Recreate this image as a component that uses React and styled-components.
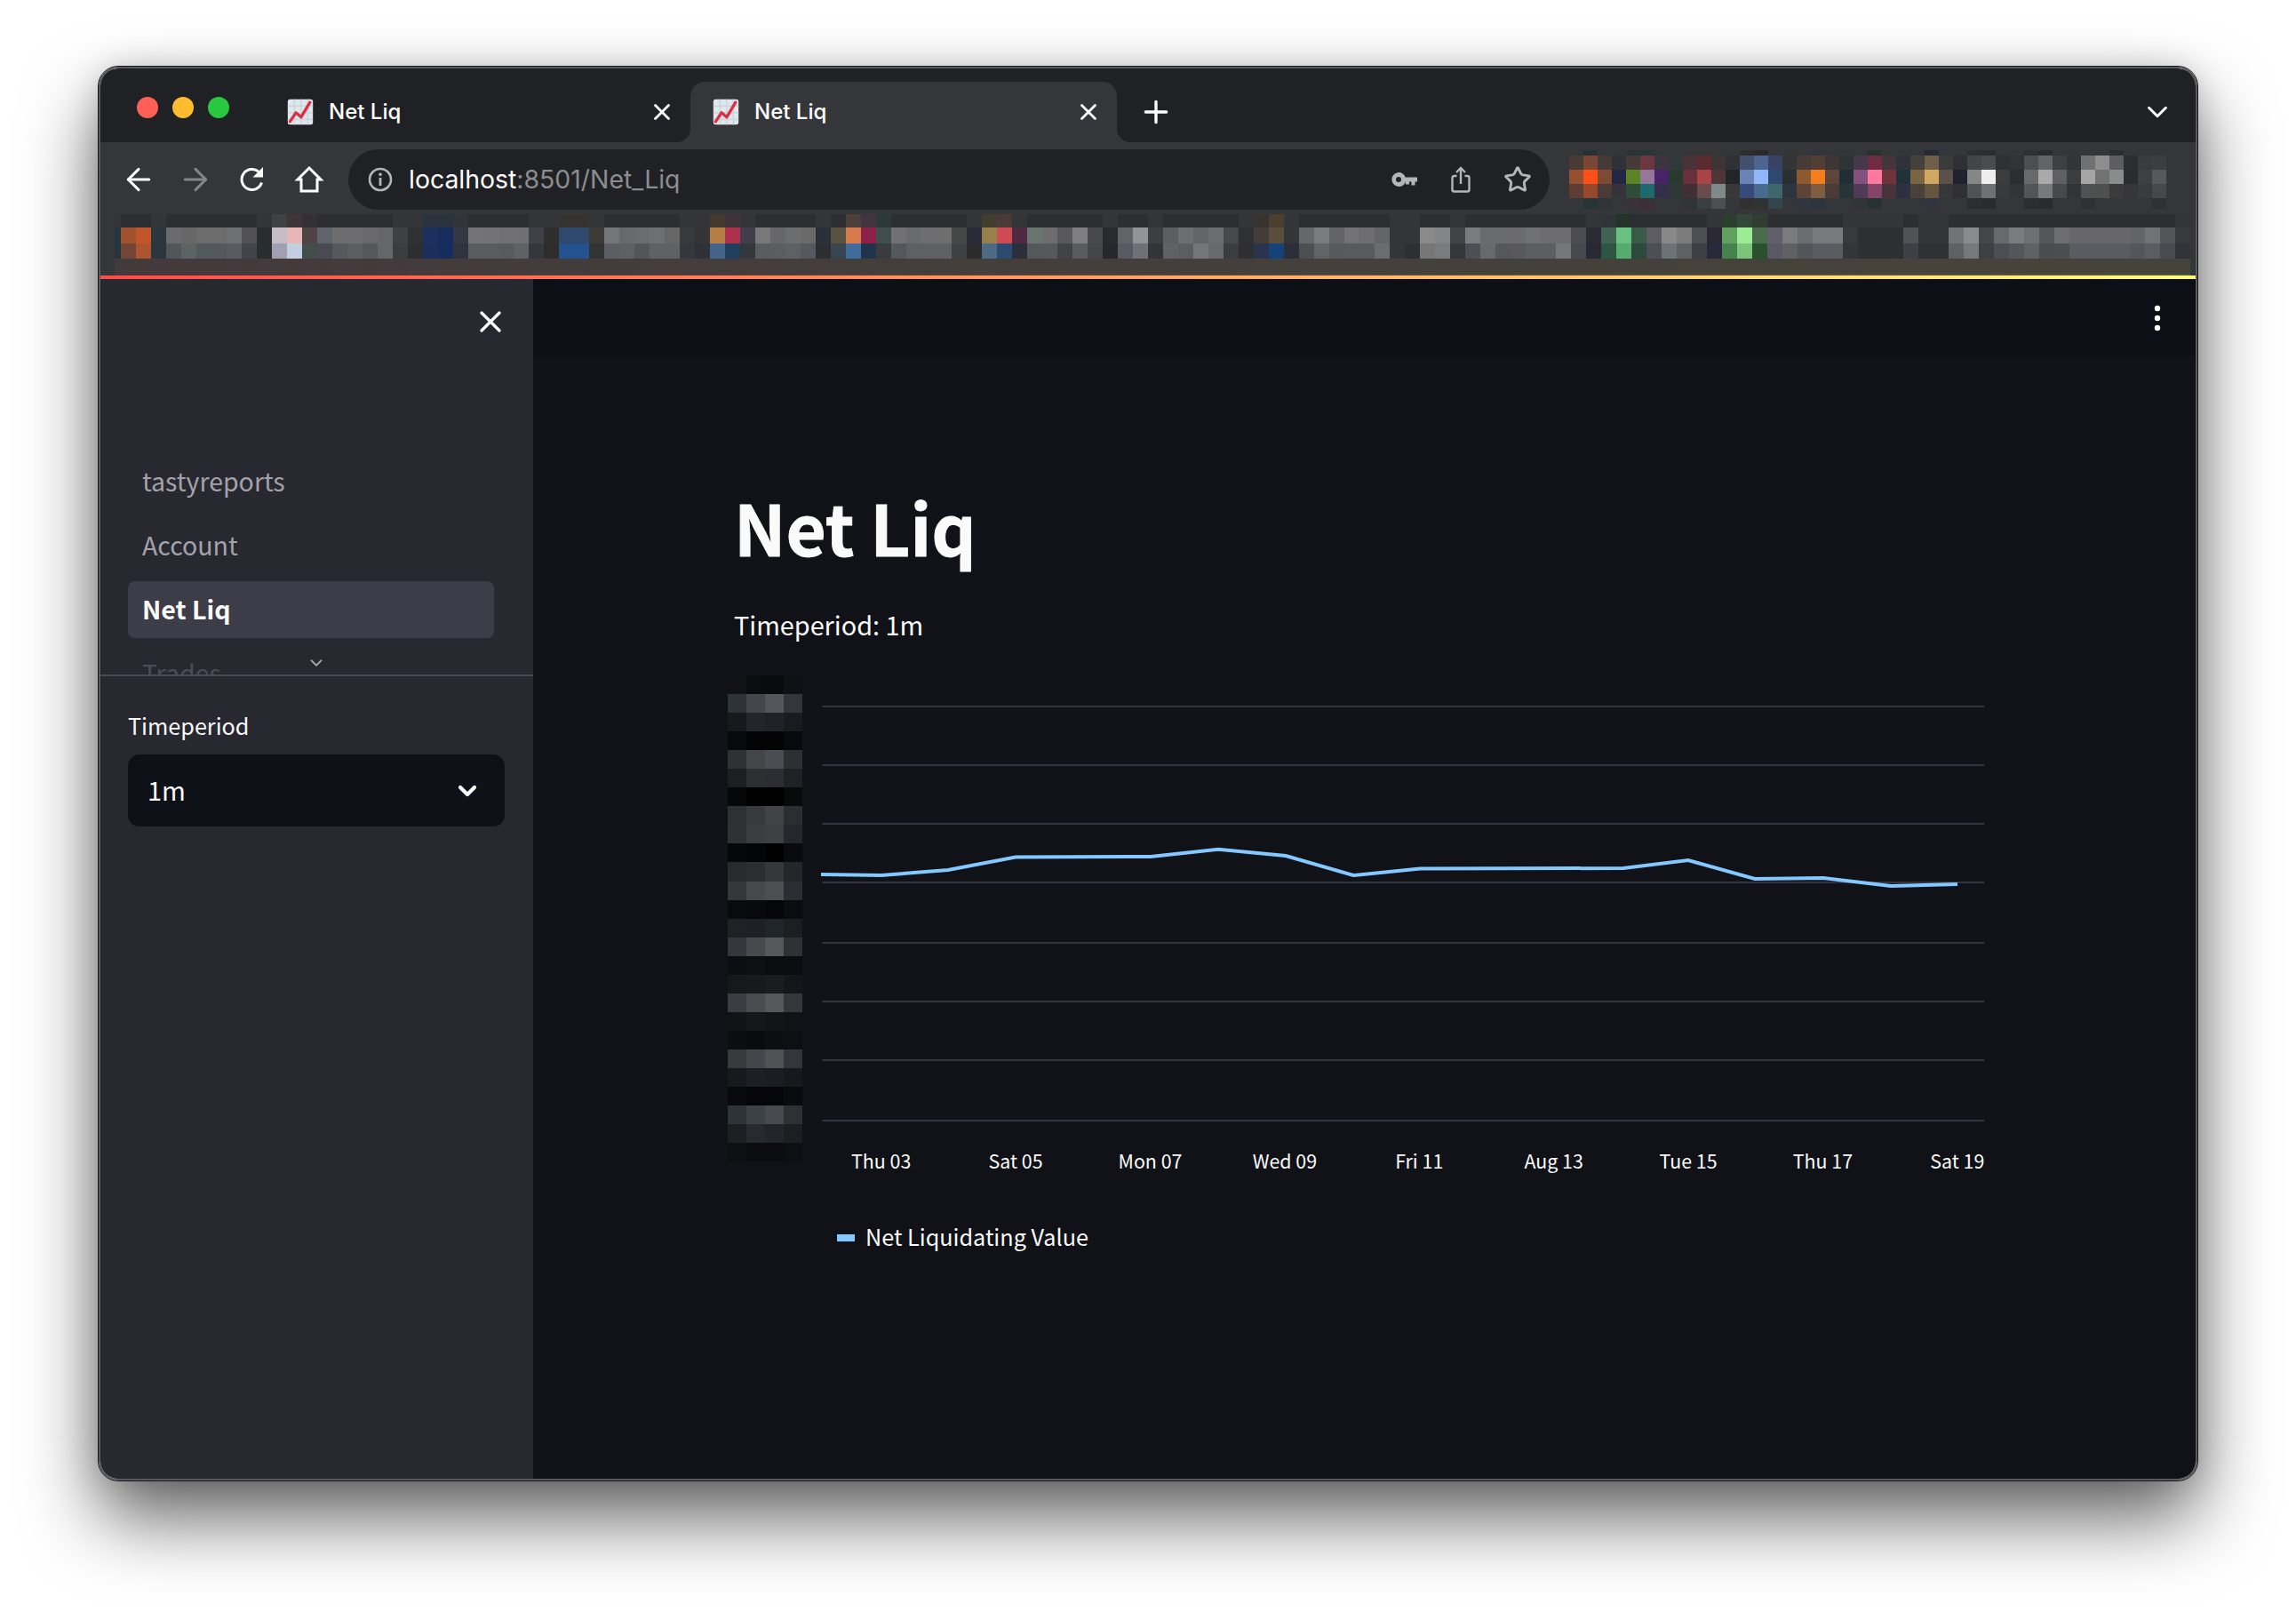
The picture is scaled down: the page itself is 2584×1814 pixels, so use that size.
import styled, { createGlobalStyle } from 'styled-components';
import { ArrowLeft, ArrowRight, ChevronDown, Plus, Star, X } from 'lucide-react';

const GlobalStyle = createGlobalStyle`
  html, body {
    margin: 0;
    padding: 0;
    background: #fff;
  }
`;

const Page = styled.div`
  box-sizing: border-box;
  width: 2584px;
  height: 1814px;
  padding: 75px 111px;
  overflow: hidden;
`;

const Window = styled.div`
  box-sizing: border-box;
  width: 2362px;
  height: 1591px;
  display: flex;
  flex-direction: column;
  border: 2px solid #58595d;
  border-radius: 22px;
  overflow: hidden;
  outline: 1px solid #16171a;
  box-shadow: 0 42px 84px rgba(0, 0, 0, 0.62), 0 0 36px rgba(0, 0, 0, 0.15);
`;

const TitleBar = styled.div`
  height: 83px;
  flex: none;
  display: flex;
  align-items: flex-end;
  background: #202124;
  color: #fff;
  font-family: Inter, "Liberation Sans", sans-serif;
`;

const Lights = styled.div`
  display: flex;
  gap: 16px;
  align-self: flex-start;
  margin: 32px 0 0 41px;
  width: 150px;
`;

const Light = styled.span`
  width: 24px;
  height: 24px;
  border-radius: 50%;
  background: ${(p) => p.$color};
`;

const Tab = styled.div`
  position: relative;
  box-sizing: border-box;
  width: ${(p) => (p.$active ? '480px' : '473px')};
  height: 68px;
  display: flex;
  align-items: center;
  padding: 0 17px 0 ${(p) => (p.$active ? '25px' : '19px')};
  border-radius: 16px 16px 0 0;
  background: ${(p) => (p.$active ? '#35363a' : 'transparent')};

  ${(p) =>
    p.$active &&
    `
    &::before, &::after {
      content: '';
      position: absolute;
      bottom: 0;
      width: 16px;
      height: 16px;
    }
    &::before {
      left: -16px;
      background: radial-gradient(circle at 0 0, transparent 16px, #35363a 16.5px);
    }
    &::after {
      right: -16px;
      background: radial-gradient(circle at 100% 0, transparent 16px, #35363a 16.5px);
    }
  `}
`;

const TabTitle = styled.span`
  flex: 1;
  margin-left: 17px;
  font-size: 24px;
  font-weight: 500;
  line-height: 30px;
`;

const NewTab = styled.div`
  display: flex;
  align-items: center;
  height: 68px;
  margin-left: 24px;
`;

const TabMenu = styled.div`
  margin-left: auto;
  height: 68px;
  display: flex;
  align-items: center;
  padding-right: 24px;
`;

const Toolbar = styled.div`
  height: 80px;
  flex: none;
  box-sizing: border-box;
  padding-top: 4px;
  display: flex;
  align-items: center;
  background: #35363a;
  color: #fff;
`;

const NavIcons = styled.div`
  width: 279px;
  box-sizing: border-box;
  padding-left: 23px;
  display: flex;
  align-items: center;
  gap: 24px;
`;

const NavIcon = styled.span`
  width: 40px;
  height: 40px;
  display: flex;
  align-items: center;
  justify-content: center;
  color: ${(p) => (p.$dim ? '#85868a' : '#fff')};
`;

const Omnibox = styled.div`
  box-sizing: border-box;
  width: 1352px;
  height: 68px;
  display: flex;
  align-items: center;
  padding: 0 20px 0 22px;
  border-radius: 34px;
  background: #202124;
`;

const Url = styled.div`
  flex: 1;
  margin-left: 18px;
  font-family: Inter, "Liberation Sans", sans-serif;
  font-size: 28.4px;
  line-height: 40px;
  color: #fff;

  span {
    color: #8c8d90;
  }
`;

const OmniIcons = styled.div`
  display: flex;
  align-items: center;
  gap: 37px;
  color: #b4b5b8;
`;

const Extensions = styled.div`
  margin-left: 22px;
  display: flex;
`;

const Bookmarks = styled.div`
  height: 70px;
  flex: none;
  box-sizing: border-box;
  padding: 1px 0 0 16px;
  background: #35363a;

  svg {
    display: block;
  }
`;

const Decoration = styled.div`
  height: 4px;
  flex: none;
  background: linear-gradient(90deg, #ff4b4b, #fffd80);
`;

const Body = styled.div`
  flex: 1;
  min-height: 0;
  display: flex;
  font-family: "Noto Sans CJK SC", "Noto Sans", sans-serif;
  color: #fafafa;
`;

const Sidebar = styled.aside`
  width: 487px;
  flex: none;
  display: flex;
  flex-direction: column;
  background: #282831;
`;

const NavArea = styled.div`
  position: relative;
  height: 445px;
  flex: none;
  overflow: hidden;
  border-bottom: 2px solid #4b4b56;
  box-sizing: content-box;
`;

const CloseRow = styled.div`
  height: 196px;
  box-sizing: border-box;
  padding: 28px 28px 0 0;
  display: flex;
  justify-content: flex-end;
  align-items: flex-start;
`;

const NavList = styled.nav`
  display: flex;
  flex-direction: column;
  gap: 8px;
  padding-left: 31px;
  width: 412px;
`;

const NavItem = styled.div`
  box-sizing: border-box;
  height: 64px;
  display: flex;
  align-items: center;
  padding: 0 0 3px 16px;
  border-radius: 8px;
  font-size: 28.5px;
  font-weight: ${(p) => (p.$active ? 600 : 400)};
  color: ${(p) => (p.$active ? '#fafafa' : p.$faded ? '#4c4c57' : '#a3a3a9')};
  background: ${(p) => (p.$active ? '#3d3d49' : 'transparent')};
`;

const MoreNav = styled.span`
  position: absolute;
  left: 232px;
  top: 421px;
  display: flex;
  color: #a3a3a9;
`;

const SidebarForm = styled.div`
  padding: 35px 31px 0;
`;

const FieldLabel = styled.div`
  font-size: 25.2px;
  line-height: 40px;
  color: #fafafa;
`;

const SelectBox = styled.div`
  box-sizing: border-box;
  width: 424px;
  height: 81px;
  margin-top: 13px;
  display: flex;
  align-items: center;
  justify-content: space-between;
  padding: 0 26px 0 22px;
  border-radius: 13px;
  background: #0e1117;
  font-size: 29px;

  span {
    padding-bottom: 3px;
  }
`;

const Main = styled.main`
  flex: 1;
  min-width: 0;
  background: #101217;
`;

const AppHeader = styled.header`
  height: 87px;
  box-sizing: border-box;
  padding: 28px 39px 0 0;
  display: flex;
  justify-content: flex-end;
  align-items: flex-start;
  background: #0c0f16;
`;

const Content = styled.section`
  padding: 131px 0 0 226px;
`;

const Title = styled.h1`
  margin: 0;
  font-size: 78px;
  font-weight: 700;
  line-height: 120px;
  color: #fafafa;
  -webkit-text-stroke: 0.8px #fafafa;
`;

const Caption = styled.p`
  margin: 29px 0 0;
  font-size: 28.8px;
  line-height: 44px;
  color: #fafafa;
`;

const Chart = styled.div`
  display: flex;
  margin: 35px 0 0 -7px;
`;

const YAxis = styled.svg`
  display: block;
  flex: none;
`;

const PlotColumn = styled.div`
  margin-left: 13px;
  display: flex;
  flex-direction: column;
`;

const Plot = styled.svg`
  display: block;
`;

const XAxis = styled.div`
  display: grid;
  grid-template-columns: repeat(9, 151.4px);
  margin-top: 6px;
  font-size: 21.4px;
  line-height: 40px;
  color: #fafafa;
`;

const Tick = styled.span`
  text-align: center;
`;

const Legend = styled.div`
  display: flex;
  align-items: center;
  gap: 12px;
  margin: 45px 0 0 26px;
  font-size: 25.2px;
  line-height: 40px;
`;

const LegendSwatch = styled.span`
  width: 20px;
  height: 8px;
  margin-top: 3px;
  background: #83c9ff;
`;

const Favicon = () => (
  <svg width="30" height="30" viewBox="0 0 36 36">
    <rect x="1" y="1" width="34" height="34" rx="3" fill="#e1e8ed" />
    <path d="M10 1v34M19 1v34M28 1v34M1 10h34M1 19h34M1 28h34" stroke="#ccd6dd" strokeWidth="2" />
    <path d="M4 31 L12 19 L19 25 L31 5" fill="none" stroke="#dd2e44" strokeWidth="4" strokeLinecap="round" strokeLinejoin="round" />
  </svg>
);

const ReloadIcon = () => (
  <svg width="34" height="34" viewBox="0 0 34 34">
    <path d="M27.5 20.5 A11.5 11.5 0 1 1 24 8.2" fill="none" stroke="currentColor" strokeWidth="3" />
    <path d="M29 3 V14.5 H17.5 Z" fill="currentColor" />
  </svg>
);

const HomeIcon = () => (
  <svg width="34" height="34" viewBox="0 0 34 34">
    <path d="M17 4 L30 17 H26 V30 H8 V17 H4 Z" fill="none" stroke="currentColor" strokeWidth="3" strokeLinejoin="miter" />
  </svg>
);

const InfoIcon = () => (
  <svg width="28" height="28" viewBox="0 0 28 28">
    <circle cx="14" cy="14" r="12" fill="none" stroke="#b4b5b8" strokeWidth="2.6" />
    <path d="M14 12v9" stroke="#b4b5b8" strokeWidth="2.8" />
    <circle cx="14" cy="8.2" r="1.8" fill="#b4b5b8" />
  </svg>
);

const KeyIcon = () => (
  <svg width="30" height="30" viewBox="0 0 30 30">
    <path fillRule="evenodd" d="M8 7a8 8 0 0 1 7.600 5.500H29v5h-2.500v4h-4v-4h-2.500v3h-4v-3a8 8 0 1 1-8-10.500z M8 12a3 3 0 1 0 0 6 3 3 0 0 0 0-6z" fill="currentColor" />
  </svg>
);

const ShareIcon = () => (
  <svg width="22" height="30" viewBox="0 0 22 30">
    <path d="M6.500 11 H3.500 a2 2 0 0 0-2 2 V26.500 A2 2 0 0 0 3.500 28.500 H18.500 A2 2 0 0 0 20.500 26.500 V13 A2 2 0 0 0 18.500 11 H15.500" fill="none" stroke="currentColor" strokeWidth="2.400" />
    <path d="M11 20 V2 M6 7 L11 2 L16 7" fill="none" stroke="currentColor" strokeWidth="2.400" />
  </svg>
);

const hexRows = (rows) => rows.map((row) => row.split(' '));

// bookmark bar, blurred in the original
const markTop = '23363f a0522f c2552a 2c363d 6b6b6d 676768 6c6c6d 6c6c6d 6f7073 525256 282d2e c6bcc8 e8b6b5 4f4343 5f646a 6d6d6f 6d6d6f 69696b 666769 3e4044 2f3133 1c2f5f 162d5e 343844 747476 737375 717173 707072 3f4146 302e2c 2f486e 2f486e 3e3a36 747578 68696b 6b6c6e 6e6f70 666666 38393d 333436 b67d47 ae304d 403e4c 787878 67676b 6c6d6f 6a6a6a 2b2f3a 55523f d67a4b 8c2048 3e4f4e 717175 6a6b6e 6e6e70 6e6e6e 464848 2a2b38 98804a cf4b52 4d2a42 6a7470 6d6d70 58595c 7e7e80 48494c 292a2d 626366 929398 3d3e40 5c5d60 6d6e72 646566 6b6c6e 47484b 2f3033 433c38 5a4d3e 343536 66676a 7a7b7c 636467 727274 6e6e70 646567 343538 343538 8a8a8a 838486 424346 7a7b7d 6a6b6e 6a6b6e 6b6b6d 707173 6c6c6e 6c6c6e 4a4e52 2c2b34 3f6350 68c180 3a5a48 5d5c63 888888 7c7c7d 4d4e50 2a2833 62a05f 9bec95 4a6a4c 615f69 7a7b7c 6c6d70 797a7c 797a7c 37393b 2e2f33 2e2f33 2e2f33 515255 343538 343538 727375 8a8b8c 45464a 68696c 7a7b7c 6e6f72 555659 6d6e70 676769 676769 676769 676769 636468 717275 535457 38393d';
const markBottom = '24363c 724536 ac552e 2c363d 50565a 5d6264 53585c 53585c 585c61 414549 282d2e a29fb2 c1cfe0 434d4a 4a4b52 55595d 5b5e60 53585a 63676a 3a3c40 2b2f32 1c2f5c 162c5c 2e333d 595d60 5a5d60 585b5e 5f6265 33383e 2e2d2c 24528e 24528e 323333 5a5f63 5d6163 52565a 5e6265 5f6265 34373b 2e3135 43648a 233f60 34383c 595d60 5b5e61 5e6164 55595d 2d2e30 3a4552 3f6c9a 20344b 3a3b3d 52585c 5e6164 5f6063 5f6063 3d4142 2b2b2b 4d6a85 2a4a70 2b2f3a 55585b 55585c 424347 5a5b5f 444549 27282c 575a63 6f7177 33343a 606164 5c5d61 75767a 68696c 3a3d40 2f2f2f 283450 16427a 2b2f3a 4d4e52 626365 58595d 595a5e 595a5e 6b6c70 343538 2e2f33 777777 7b7c7e 353639 4e4f55 68696c 56575a 59595d 5d5e60 5d5e60 767779 464a4e 2a2834 2e5444 58ab6e 2b4a3c 4e4e56 6d7276 5f6063 3d3f44 29283a 46824e 7cc47c 2a5030 5a5866 606164 54555a 5b5c61 5b5c61 333538 2e2f33 2e2f33 2e2f33 3e4045 303135 303135 5f6063 77787a 3e3f43 4d4e53 55565b 606165 4b4c51 4c4d51 5b5c62 5b5c62 5b5c62 5b5c62 55565b 5c5d62 4a4b50 33343a';

const markTints = {
  11: '3d4345', 12: '3f3539', 13: '353033', 21: '2c3340', 22: '2c3340', 23: '33333a', 30: '36322f', 31: '36322f',
  40: '43392f', 41: '3f3238', 49: '4e3e38', 50: '423540', 51: '2d3838', 58: '433d30', 59: '4a3b38', 76: '38332f',
  77: '4c3f30', 99: '2f3438', 100: '253229', 107: '2a402c', 108: '35463a', 109: '2f3d33',
};

const mix = (a, b, t) => Math.round(a + (b - a) * t).toString(16).padStart(2, '0');
const isBright = (hex) => parseInt(hex.slice(0, 2), 16) + parseInt(hex.slice(2, 4), 16) + parseInt(hex.slice(4, 6), 16) > 210;

const buildBookmarks = () => {
  const second = markTop.split(' ');
  const third = markBottom.split(' ');
  const first = second.map((c, i) => markTints[i] || (isBright(c) ? '2d2e31' : '343538'));
  const fourth = second.map((_, i) => {
    const t = i / second.length;
    const n = (i * 7) % 5;
    return mix(0x43, 0x45, t) + mix(0x3a, 0x44, t) + mix(0x3e - n, 0x3a, t);
  });
  const fifth = second.map((_, i) => {
    const t = i / second.length;
    return mix(0x55, 0x5a, t) + mix(0x2f, 0x55, t) + '33';
  });
  return [first, second, third, fourth, fifth];
};

const extensionRows = hexRows([
  '34363a 223238 34363a 34363a 2a3438 26363a 34363a 34363a 34363a 34363a 34363a 34363a 302e2c 2a2926 34363a 34363a 34363a 2f3640 34363a 34363a 34363a 26342f 34363a 34363a 34363a 262a35 34363a 34363a 2f3033 2c2d30 34363a 34363a 2f3033 2a2b2e 34363a 34363a 34363a 34363a 2c2d30 34363a 34363a 34363a',
  '4a3a36 7b4533 453a36 2e3138 453a36 6b3840 3c3540 33383a 4a3338 5a2c30 3e3436 2f3134 41506e 4e6490 384262 323436 483a36 523e32 3e3634 2e3436 46384a 6f2b44 42363a 2e3338 45403a 6e6048 3b3b3b 2f3033 434447 4b4c4f 2f3033 323336 4d4e51 636467 3e3f42 333437 6f7072 8e8e8e 5c5d61 2c2d30 3a3b3e 3c3d40',
  '97502f fd5016 7f4a33 232745 5b8425 96779c 47246a 28392e 67303a a84445 4d3538 212527 6883b4 90b8f8 2f4870 2a2f33 8c5a2e f47e1e 5f4537 222e36 84507e ff78a0 6f333c 20313a 7a6444 d2a860 5a5248 202230 858687 eeeeee 3b3c3e 2c2d30 68696c a9a9aa 5f6063 3c3d40 a5a5a5 727371 8a8b8c 2b2c2e 3e3f42 57585c',
  '5c3c33 96482c 4a3a38 35323c 2f4c38 1c6a6e 342f48 2f3836 412f34 674b4d 7f8a88 383836 364b7c 486a8e 3f666c 2c3440 5c4536 7e5c40 493b38 293436 503a58 85446a 483438 2d3040 4a4238 63553f 38383a 2f3032 515255 707174 38393c 333437 535457 78797c 47484b 333437 505153 4e4f4f 3b3b3b 35363a 3a3b3e 47484c',
  '34363a 263438 2f3438 34363a 3a3238 3e2f33 34363a 34363a 2f3438 3a3f42 4d4e50 34363a 32302e 2f3432 34454e 34363a 2f3640 2c3440 34363a 34363a 2f3532 26342f 34363a 34363a 34363a 2f3640 34363a 34363a 2c2d30 2a2b2e 34363a 34363a 2c2d30 2a2b2e 34363a 34363a 2f3033 34363a 34363a 34363a 34363a 2f3033',
]);

const yAxisRows = hexRows([
  '101216 0b0c10 0a0b0f 0f1115',
  '2e3239 44464c 55565c 33363c',
  '17191d 23252a 202229 191b1f',
  '08090c 040406 040406 08090c',
  '2f3135 444549 4b4d54 2e2f33',
  '1c1e22 2d2f33 2a2d31 1f2125',
  '060709 000002 000000 08090b',
  '2f3034 38393d 424346 2c2d31',
  '2f3135 3c3d41 3d3f43 23272e',
  '06070a 040508 000003 0a0b0e',
  '292a2e 2c2d31 36373b 25262a',
  '36373b 47484c 4d4e52 2b2e33',
  '0a0b0e 08090c 050609 0b0c10',
  '1f2125 1d2127 20242b 1c1e22',
  '34383e 48494d 55575b 303134',
  '0d0e11 0e0f12 0b0c0f 0c0d10',
  '17181c 18191d 1b1c20 15161a',
  '3a3d43 4a4b4f 56575b 36373b',
  '121317 16171b 131418 111216',
  '0c0d10 0a0b0e 0d0e11 0e0f12',
  '38393d 45464c 515256 33363c',
  '17191d 1c2026 1a1e24 17191d',
  '08090c 050609 050609 0a0b0e',
  '2e3239 3c4047 484a50 2f3034',
  '1d1f23 272a2e 22262c 1c1e22',
  '0e0f12 0b0c0f 0b0c0f 0e0f12',
]);

const Mosaic = ({ rows, cellWidth, rowHeights, offsetX = 0, as: Svg = 'svg' }) => {
  const width = rows[0].length * cellWidth + offsetX;
  const height = rowHeights.reduce((a, b) => a + b, 0);
  let y = 0;
  return (
    <Svg width={width} height={height} viewBox={`0 0 ${width} ${height}`} shapeRendering="crispEdges">
      {rows.map((row, r) => {
        const top = y;
        y += rowHeights[r];
        return row.map((color, c) => (
          <rect key={`${r}-${c}`} x={c * cellWidth + offsetX} y={top} width={cellWidth} height={rowHeights[r]} fill={`#${color}`} />
        ));
      })}
    </Svg>
  );
};

const gridLines = [35, 101, 167, 233, 301, 367, 433, 501];
const series = [
  [8, 224], [76, 225], [151, 219], [227, 204.500], [379, 204], [455, 195.700], [531, 203], [607, 225],
  [682, 217.600], [911, 217], [984, 208], [1059, 229], [1136, 228], [1212, 237], [1287, 235],
];
const ticks = ['Thu 03', 'Sat 05', 'Mon 07', 'Wed 09', 'Fri 11', 'Aug 13', 'Tue 15', 'Thu 17', 'Sat 19'];

const LineChart = () => (
  <Plot width="1324" height="520" viewBox="0 0 1324 520">
    {gridLines.map((y) => (
      <line key={y} x1="9" x2="1317" y1={y} y2={y} stroke="#31333f" strokeWidth="2" />
    ))}
    <polyline points={series.map((p) => p.join(',')).join(' ')} fill="none" stroke="#83c9ff" strokeWidth="4" strokeLinejoin="miter" />
  </Plot>
);

export default function App() {
  return (
    <Page>
      <GlobalStyle />
      <Window>
        <TitleBar>
          <Lights>
            <Light $color="#ff5f57" />
            <Light $color="#febc2e" />
            <Light $color="#28c840" />
          </Lights>
          <Tab>
            <Favicon />
            <TabTitle>Net Liq</TabTitle>
            <X size={30} strokeWidth={2.2} />
          </Tab>
          <Tab $active>
            <Favicon />
            <TabTitle>Net Liq</TabTitle>
            <X size={30} strokeWidth={2.2} />
          </Tab>
          <NewTab>
            <Plus size={40} strokeWidth={2} />
          </NewTab>
          <TabMenu>
            <ChevronDown size={38} strokeWidth={1.9} />
          </TabMenu>
        </TitleBar>

        <Toolbar>
          <NavIcons>
            <NavIcon><ArrowLeft size={40} strokeWidth={1.8} /></NavIcon>
            <NavIcon $dim><ArrowRight size={40} strokeWidth={1.8} /></NavIcon>
            <NavIcon><ReloadIcon /></NavIcon>
            <NavIcon><HomeIcon /></NavIcon>
          </NavIcons>
          <Omnibox>
            <InfoIcon />
            <Url>localhost<span>:8501/Net_Liq</span></Url>
            <OmniIcons>
              <KeyIcon />
              <ShareIcon />
              <Star size={32} strokeWidth={2.2} />
            </OmniIcons>
          </Omnibox>
          <Extensions>
            <Mosaic rows={extensionRows} cellWidth={16} rowHeights={[6, 16, 16, 16, 12]} />
          </Extensions>
        </Toolbar>

        <Bookmarks>
          <Mosaic rows={buildBookmarks()} cellWidth={17} rowHeights={[15, 18, 17, 17, 2]} offsetX={-10} />
        </Bookmarks>
        <Decoration />

        <Body>
          <Sidebar>
            <NavArea>
              <CloseRow>
                <X size={40} strokeWidth={2} />
              </CloseRow>
              <NavList>
                <NavItem>tastyreports</NavItem>
                <NavItem>Account</NavItem>
                <NavItem $active>Net Liq</NavItem>
                <NavItem $faded>Trades</NavItem>
              </NavList>
              <MoreNav><ChevronDown size={22} strokeWidth={2} /></MoreNav>
            </NavArea>
            <SidebarForm>
              <FieldLabel>Timeperiod</FieldLabel>
              <SelectBox>
                <span>1m</span>
                <ChevronDown size={32} strokeWidth={3.2} />
              </SelectBox>
            </SidebarForm>
          </Sidebar>

          <Main>
            <AppHeader>
              <svg width="8" height="32" viewBox="0 0 8 32">
                <circle cx="4" cy="5" r="3.200" fill="#fff" />
                <circle cx="4" cy="16" r="3.200" fill="#fff" />
                <circle cx="4" cy="27" r="3.200" fill="#fff" />
              </svg>
            </AppHeader>
            <Content>
              <Title>Net Liq</Title>
              <Caption>Timeperiod: 1m</Caption>
              <Chart>
                <Mosaic rows={yAxisRows} cellWidth={21} rowHeights={yAxisRows.map(() => 21.050)} as={YAxis} />
                <PlotColumn>
                  <LineChart />
                  <XAxis>
                    {ticks.map((t) => (
                      <Tick key={t}>{t}</Tick>
                    ))}
                  </XAxis>
                  <Legend>
                    <LegendSwatch />
                    Net Liquidating Value
                  </Legend>
                </PlotColumn>
              </Chart>
            </Content>
          </Main>
        </Body>
      </Window>
    </Page>
  );
}
